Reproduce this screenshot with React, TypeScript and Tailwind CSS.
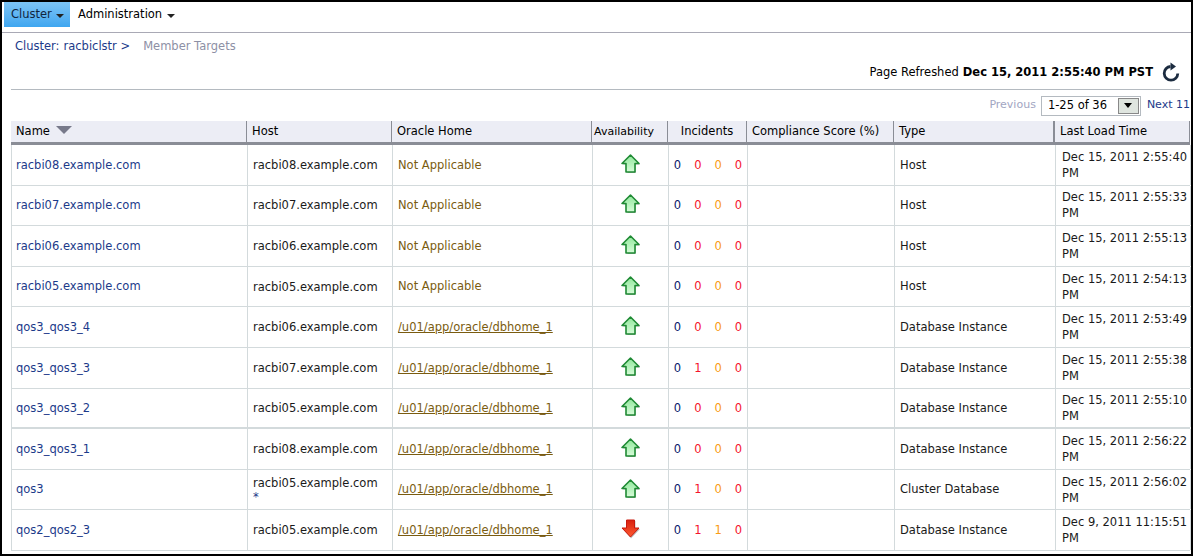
import React from 'react';

type Row = {
  name: string;
  host: string;
  home: string;
  up: boolean;
  inc: string[];
  type: string;
  time: string;
};

const dbHome = '/u01/app/oracle/dbhome_1';

const rows: Row[] = [
  { name: 'racbi08.example.com', host: 'racbi08.example.com', home: 'Not Applicable', up: true, inc: ['0', '0', '0', '0'], type: 'Host', time: 'Dec 15, 2011 2:55:40 PM' },
  { name: 'racbi07.example.com', host: 'racbi07.example.com', home: 'Not Applicable', up: true, inc: ['0', '0', '0', '0'], type: 'Host', time: 'Dec 15, 2011 2:55:33 PM' },
  { name: 'racbi06.example.com', host: 'racbi06.example.com', home: 'Not Applicable', up: true, inc: ['0', '0', '0', '0'], type: 'Host', time: 'Dec 15, 2011 2:55:13 PM' },
  { name: 'racbi05.example.com', host: 'racbi05.example.com', home: 'Not Applicable', up: true, inc: ['0', '0', '0', '0'], type: 'Host', time: 'Dec 15, 2011 2:54:13 PM' },
  { name: 'qos3_qos3_4', host: 'racbi06.example.com', home: dbHome, up: true, inc: ['0', '0', '0', '0'], type: 'Database Instance', time: 'Dec 15, 2011 2:53:49 PM' },
  { name: 'qos3_qos3_3', host: 'racbi07.example.com', home: dbHome, up: true, inc: ['0', '1', '0', '0'], type: 'Database Instance', time: 'Dec 15, 2011 2:55:38 PM' },
  { name: 'qos3_qos3_2', host: 'racbi05.example.com', home: dbHome, up: true, inc: ['0', '0', '0', '0'], type: 'Database Instance', time: 'Dec 15, 2011 2:55:10 PM' },
  { name: 'qos3_qos3_1', host: 'racbi08.example.com', home: dbHome, up: true, inc: ['0', '0', '0', '0'], type: 'Database Instance', time: 'Dec 15, 2011 2:56:22 PM' },
  { name: 'qos3', host: 'racbi05.example.com', home: dbHome, up: true, inc: ['0', '1', '0', '0'], type: 'Cluster Database', time: 'Dec 15, 2011 2:56:02 PM' },
  { name: 'qos2_qos2_3', host: 'racbi05.example.com', home: dbHome, up: false, inc: ['0', '1', '1', '0'], type: 'Database Instance', time: 'Dec 9, 2011 11:15:51 PM' },
];

const incColors = ['text-[#0a1a6b]', 'text-[#f5142c]', 'text-[#fa9c14]', 'text-[#f5142c]'];
const gridCols = 'grid grid-cols-[236px_145px_200px_76px_79px_147px_161px_135px]';

const Arrow = ({ up }: { up: boolean }) => (
  <svg className="mb-[2px]" width="22" height="22" viewBox="0 0 22 22">
    <defs>
      <linearGradient id="arrowUp" x1="0" y1="0" x2="0" y2="1">
        <stop offset="0" stopColor="#8fe89a" />
        <stop offset="1" stopColor="#d6fbd8" />
      </linearGradient>
      <linearGradient id="arrowDown" x1="0" y1="0" x2="0" y2="1">
        <stop offset="0" stopColor="#d8200f" />
        <stop offset="1" stopColor="#ff5a30" />
      </linearGradient>
    </defs>
    {up ? (
      <>
        <path d="M11 3 L20 11.5 L15.5 11.5 L15.5 20 L7.5 20 L7.5 11.5 L3 11.5 Z" fill="#000" opacity="0.3" />
        <path d="M10.5 2 L19 10.5 L15 10.5 L15 19 L6 19 L6 10.5 L2 10.5 Z" fill="url(#arrowUp)" stroke="#1f8a34" strokeWidth="1.6" strokeLinejoin="round" />
      </>
    ) : (
      <>
        <path d="M7.5 3 L15.5 3 L15.5 11 L20 11 L11 20.5 L3 11 L7.5 11 Z" fill="#000" opacity="0.25" />
        <path d="M6.5 2 L14.5 2 L14.5 10 L19 10 L10.5 19 L2 10 L6.5 10 Z" fill="url(#arrowDown)" stroke="#c8180c" strokeWidth="1" strokeLinejoin="round" />
      </>
    )}
  </svg>
);

const Head = ({ children, className = '' }: { children: React.ReactNode; className?: string }) => (
  <div className={`flex items-center border-r border-[#8a8d96] px-[5px] pt-[1px] ${className}`}>{children}</div>
);

export default function App() {
  return (
    <div className="h-[556px] w-[1193px] overflow-hidden border-t-2 border-b-2 border-l-[2px] border-r-[2px] border-black bg-white text-[11.5px] text-[#1a1a1a] [font-family:'DejaVu_Sans','Liberation_Sans',sans-serif]">
      <div className="flex h-[31px] items-start border-b border-[#a9a9b5]">
        <div className="ml-[2px] flex h-[25px] w-[66px] items-center gap-[4px] bg-gradient-to-b from-[#7cc4f5] to-[#3ea6f0] pl-[7px] text-[#10253f]">
          Cluster
          <span className="mt-[3px] h-0 w-0 border-x-[4px] border-t-[4px] border-x-transparent border-t-[#222]" />
        </div>
        <div className="ml-[8px] flex h-[25px] items-center gap-[5px] text-black">
          Administration
          <span className="mt-[3px] h-0 w-0 border-x-[4px] border-t-[4px] border-x-transparent border-t-[#222]" />
        </div>
      </div>

      <div className="flex h-[27px] items-center pl-[13px] text-[#1c3a8a]">
        <span>Cluster:</span>
        <span className="ml-[4px]">racbiclstr &gt;</span>
        <span className="ml-[13px] text-[#8d90a5]">Member Targets</span>
      </div>

      <div className="mr-[11px] ml-[9px] flex h-[30px] items-start justify-end border-b border-[#b4bac0]">
        <span className="mt-[4px] text-black">Page Refreshed</span>
        <span className="mt-[4px] ml-[4px] font-bold text-black">Dec 15, 2011 2:55:40 PM PST</span>
        <svg className="mt-[2px] mr-[-1px] ml-[8px]" width="20" height="20" viewBox="0 0 20 20" fill="none">
          <path d="M9.5 4.5 A6.8 6.8 0 1 0 16.8 11.5" stroke="#1c2c40" strokeWidth="2.8" />
          <path d="M9.5 0.5 L15 4.5 L9.5 8.5 Z" fill="#1c2c40" />
        </svg>
      </div>

      <div className="flex h-[31px] items-center justify-end gap-[5px] pr-[1px] text-[11px]">
        <span className="text-[#a2a6c2]">Previous</span>
        <div className="flex h-[20px] w-[100px] items-center justify-between border border-[#b4bac0] pl-[6px] pr-[1px] text-[11.5px] text-black">
          1-25 of 36
          <div className="flex h-[16px] w-[21px] items-center justify-center border border-[#888] bg-[#dfe5df]">
            <span className="h-0 w-0 border-x-[4px] border-t-[5px] border-x-transparent border-t-black" />
          </div>
        </div>
        <span className="ml-[1px] text-[#1c3a8a]">Next 11</span>
      </div>

      <div className="ml-[9px] w-[1179px]">
        <div className={`${gridCols} h-[24px] border-b-[3px] border-[#8a8d96] bg-[#ecedf5] text-black`}>
          <Head>
            Name
            <span className="mb-[4px] ml-[6px] h-0 w-0 border-x-[8px] border-t-[8px] border-x-transparent border-t-[#77798a]" />
          </Head>
          <Head>Host</Head>
          <Head>Oracle Home</Head>
          <Head className="!px-[2px] text-[11px]">Availability</Head>
          <Head className="justify-center">Incidents</Head>
          <Head>Compliance Score (%)</Head>
          <Head className="border-r-[2px]">Type</Head>
          <Head>Last Load Time</Head>
        </div>
        {rows.map((r, i) => (
          <div
            key={r.name}
            className={`${gridCols} h-[40.6px] border-b border-l border-[#d3dadc] ${i === 6 ? 'border-b-[2px]' : ''}`}
          >
            <div className="flex items-center border-r border-[#d3dadc] pt-[1px] pl-[4px] text-[#1c3a8a]">{r.name}</div>
            <div className="flex flex-col justify-center border-r border-[#d3dadc] px-[5px] leading-[14px]">
              <span>{r.host}</span>
              {r.name === 'qos3' && <span className="text-[#1c3a8a]">*</span>}
            </div>
            <div className="flex items-center border-r border-[#d3dadc] px-[5px] pt-[1px] text-[#7a5c10]">
              {r.home === dbHome ? <span className="underline">{r.home}</span> : r.home}
            </div>
            <div className="flex items-center justify-center border-r border-[#d3dadc]">
              <Arrow up={r.up} />
            </div>
            <div className="flex items-center justify-center gap-[13px] border-r border-[#d3dadc] pt-[1px]">
              {r.inc.map((n, j) => (
                <span key={j} className={incColors[j]}>{n}</span>
              ))}
            </div>
            <div className="border-r border-[#d3dadc]" />
            <div className="flex items-center border-r border-[#d3dadc] px-[5px] pt-[1px]">{r.type}</div>
            <div className="flex items-center border-r border-[#d3dadc] pl-[6px] pr-[2px] leading-[16px]">{r.time}</div>
          </div>
        ))}
      </div>
    </div>
  );
}
